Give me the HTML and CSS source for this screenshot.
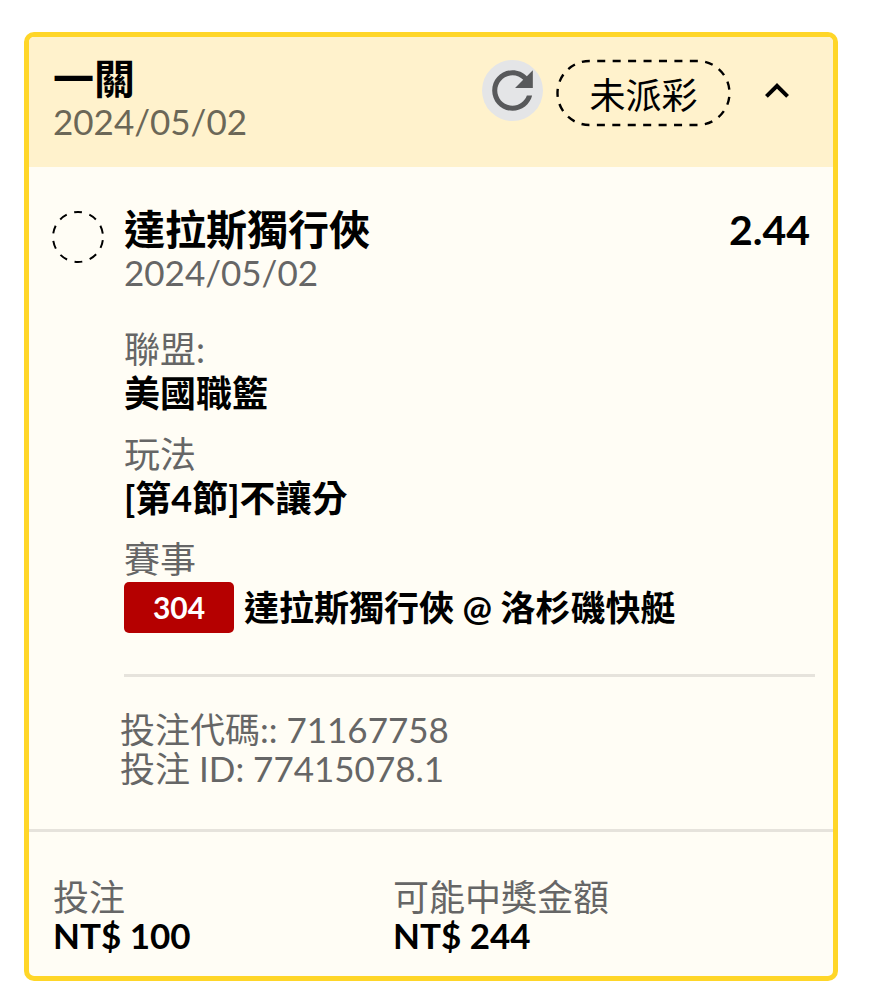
FILE: index.html
```html
<!DOCTYPE html>
<html lang="zh-Hant">
<head>
    <meta charset="UTF-8">
    <meta name="viewport" content="width=device-width, initial-scale=1.0">
    <title>投注</title>
    <link rel="stylesheet" href="styles.css">
</head>
<body>
    <article class="bet-card">
        <header class="bet-header">
            <div class="bet-heading">
                <h2 class="title">一關</h2>
                <p class="date">2024/05/02</p>
            </div>
            <div class="bet-actions">
                <button type="button" class="refresh-btn" aria-label="重新整理">
                    <svg viewBox="0 0 24 24"><path d="M17.65 6.35C16.2 4.9 14.21 4 12 4c-4.42 0-7.99 3.58-7.99 8s3.57 8 7.99 8c3.73 0 6.84-2.55 7.73-6h-2.08c-.82 2.33-3.04 4-5.65 4-3.31 0-6-2.69-6-6s2.69-6 6-6c1.66 0 3.14.69 4.22 1.78L13 11h7V4l-2.35 2.35z"/></svg>
                </button>
                <span class="status">
                    <svg class="status-outline" viewBox="0 0 175 68"><rect x="1.5" y="1" width="172" height="64" rx="32" pathLength="270"/></svg>
                    未派彩
                </span>
                <button type="button" class="toggle-btn" aria-label="收合">
                    <svg viewBox="0 0 24 24"><path d="M12 8l-6 6 1.41 1.41L12 10.83l4.59 4.58L18 14z"/></svg>
                </button>
            </div>
        </header>

        <section class="bet-body">
            <svg class="pending" viewBox="0 0 52 52"><circle cx="25" cy="26" r="25"/></svg>
            <div class="selection">
                <div class="selection-top">
                    <div>
                        <h3 class="title">達拉斯獨行俠</h3>
                        <p class="date">2024/05/02</p>
                    </div>
                    <strong class="odds">2.44</strong>
                </div>
                <dl class="details">
                    <div>
                        <dt>聯盟:</dt>
                        <dd>美國職籃</dd>
                    </div>
                    <div>
                        <dt>玩法</dt>
                        <dd>[第4節]不讓分</dd>
                    </div>
                    <div>
                        <dt>賽事</dt>
                        <dd class="match"><span class="match-no">304</span>達拉斯獨行俠 @ 洛杉磯快艇</dd>
                    </div>
                </dl>
            </div>
        </section>

        <section class="bet-codes">
            <p>投注代碼:: 71167758</p>
            <p>投注 ID: 77415078.1</p>
        </section>

        <footer>
            <dl class="totals">
                <div>
                    <dt>投注</dt>
                    <dd>NT$ 100</dd>
                </div>
                <div>
                    <dt>可能中獎金額</dt>
                    <dd>NT$ 244</dd>
                </div>
            </dl>
        </footer>
    </article>
</body>
</html>
```
FILE: styles.css
```css
* {
    box-sizing: border-box;
}

body {
    margin: 0;
    padding: 32px 34px 20px 24px;
    background: #fff;
    color: #000;
    font-family: Lato, "Noto Sans CJK TC", sans-serif;
    font-size: 36px;
    line-height: 39px;
}

h2, h3, p, dl, dd {
    margin: 0;
}

button {
    padding: 0;
    border: none;
    background: none;
    cursor: pointer;
}

svg {
    display: block;
}

.bet-card {
    border: 5px solid #ffd628;
    border-radius: 10px;
    background: #fffdf5;
    overflow: hidden;
}

.bet-header {
    display: flex;
    justify-content: space-between;
    align-items: flex-start;
    padding: 20px 23px 26px 24px;
    background: #fff2cc;
}

.title {
    font-size: 41px;
    line-height: 44px;
    font-weight: 700;
}

.date {
    font-size: 35px;
    line-height: 40px;
    color: #666;
}

.bet-header .date {
    color: #6b6757;
}

.bet-actions {
    display: flex;
    align-items: flex-start;
    gap: 13px;
    padding-top: 3px;
}

.refresh-btn {
    width: 61px;
    height: 61px;
    border-radius: 50%;
    background: #e4e5e7;
    fill: #58595b;
}

.status {
    position: relative;
    width: 175px;
    line-height: 70px;
    text-align: center;
}

.status-outline {
    position: absolute;
    top: 0;
    left: 0;
    width: 175px;
    height: 68px;
    fill: none;
    stroke: #000;
    stroke-width: 2.4;
    stroke-dasharray: 5.2 4.8;
    stroke-dashoffset: 5;
    overflow: visible;
}

.toggle-btn {
    width: 66px;
    height: 61px;
}

.toggle-btn svg {
    width: 48px;
    margin: 0 auto;
}

.bet-body {
    display: flex;
    gap: 19px;
    padding: 41px 18px 0 24px;
}

.pending {
    flex: none;
    width: 52px;
    height: 52px;
    margin-top: 3px;
    fill: none;
    stroke: #000;
    stroke-width: 2;
    stroke-dasharray: 8 7.7;
    stroke-dashoffset: -3.2;
    overflow: visible;
}

.selection {
    flex: 1;
    padding-bottom: 41px;
    border-bottom: 3px solid #e6e3dc;
}

.selection-top {
    display: flex;
    justify-content: space-between;
    padding-right: 5px;
}

.odds {
    font-size: 41px;
    line-height: 44px;
}

.details {
    display: grid;
    gap: 17px;
    margin-top: 35px;
    line-height: 44px;
}

dt {
    color: #666;
}

dd {
    font-weight: 700;
}

.match {
    display: flex;
    align-items: center;
    gap: 10px;
    margin-top: 1px;
    font-size: 35px;
    line-height: 51px;
}

.match-no {
    width: 110px;
    border-radius: 5px;
    background: #b50000;
    color: #fff;
    font-size: 30px;
    text-align: center;
}

.bet-codes {
    padding: 33px 24px 41px 91px;
    border-bottom: 3px solid #e6e3dc;
    color: #666;
    font-size: 35px;
}

.totals {
    display: grid;
    grid-template-columns: 340px 1fr;
    padding: 46px 24px 21px;
}

.totals dt {
    line-height: 38px;
}

.totals dd {
    font-size: 35px;
}
```
